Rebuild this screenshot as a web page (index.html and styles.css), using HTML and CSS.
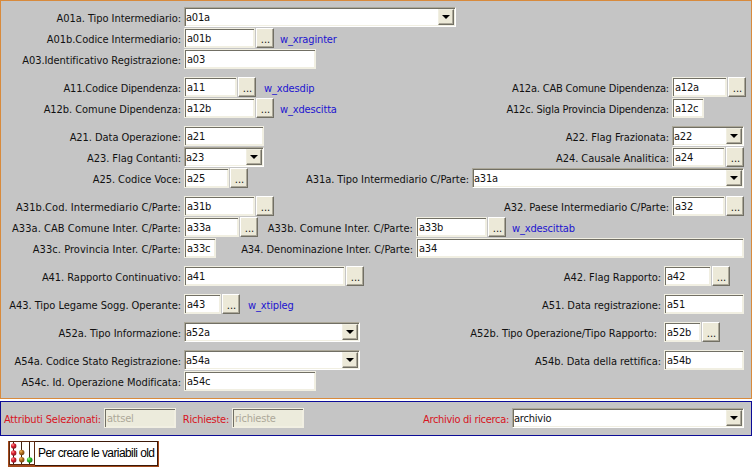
FILE: index.html
```
<!DOCTYPE html>
<html lang="it">
<head>
<meta charset="utf-8">
<title>Archivio</title>
<link rel="stylesheet" href="styles.css">
</head>
<body>
<main class="panel main">
  <div class="row"><label class="first">A01a. Tipo Intermediario:</label><div class="select w272">a01a<i></i></div></div>
  <div class="row"><label class="first">A01b.Codice Intermediario:</label><div class="input w71">a01b</div><button>...</button><span class="note near">w_xraginter</span></div>
  <div class="row"><label class="first">A03.Identificativo Registrazione:</label><div class="input w132">a03</div></div>

  <div class="row group"><label class="first tight">A11.Codice Dipendenza:</label><div class="input w53">a11</div><button>...</button><span class="note">w_xdesdip</span>
    <label class="right tight">A12a. CAB Comune Dipendenza:</label><div class="tail t79"><div class="input w55">a12a</div><button>...</button></div></div>
  <div class="row"><label class="first">A12b. Comune Dipendenza:</label><div class="input w71">a12b</div><button>...</button><span class="note near">w_xdescitta</span>
    <label class="right tight">A12c. Sigla Provincia Dipendenza:</label><div class="tail t79"><div class="input w32">a12c</div></div></div>

  <div class="row group"><label class="first">A21. Data Operazione:</label><div class="input w80">a21</div>
    <label class="right">A22. Flag Frazionata:</label><div class="tail t79"><div class="select w72">a22<i></i></div></div></div>
  <div class="row"><label class="first">A23. Flag Contanti:</label><div class="select w80">a23<i></i></div>
    <label class="right">A24. Causale Analitica:</label><div class="tail t79"><div class="input w53">a24</div><button>...</button></div></div>
  <div class="row"><label class="first">A25. Codice Voce:</label><div class="input w45">a25</div><button>...</button>
    <label class="right">A31a. Tipo Intermediario C/Parte:</label><div class="tail t279"><div class="select w272">a31a<i></i></div></div></div>

  <div class="row group"><label class="first loose">A31b.Cod. Intermediario C/Parte:</label><div class="input w71">a31b</div><button>...</button>
    <label class="right">A32. Paese Intermediario C/Parte:</label><div class="tail t79"><div class="input w53">a32</div><button>...</button></div></div>
  <div class="row"><label class="first loose">A33a. CAB Comune Inter. C/Parte:</label><div class="input w55">a33a</div><button>...</button>
    <label class="right loose">A33b. Comune Inter. C/Parte:</label><div class="tail t335"><div class="input w71">a33b</div><button>...</button><span class="note near">w_xdescittab</span></div></div>
  <div class="row"><label class="first loose">A33c. Provincia Inter. C/Parte:</label><div class="input w32">a33c</div>
    <label class="right">A34. Denominazione Inter. C/Parte:</label><div class="tail t335"><div class="input w328">a34</div></div></div>

  <div class="row group"><label class="first">A41. Rapporto Continuativo:</label><div class="input w161">a41</div><button>...</button>
    <label class="right">A42. Flag Rapporto:</label><div class="tail t87"><div class="input w47">a42</div><button>...</button></div></div>

  <div class="row group"><label class="first">A43. Tipo Legame Sogg. Operante:</label><div class="input w37">a43</div><button>...</button><span class="note">w_xtipleg</span>
    <label class="right">A51. Data registrazione:</label><div class="tail t87"><div class="input w80">a51</div></div></div>

  <div class="row group"><label class="first">A52a. Tipo Informazione:</label><div class="select w176">a52a<i></i></div>
    <label class="right wide">A52b. Tipo Operazione/Tipo Rapporto:</label><div class="tail t87"><div class="input w37">a52b</div><button>...</button></div></div>

  <div class="row group"><label class="first">A54a. Codice Stato Registrazione:</label><div class="select w176">a54a<i></i></div>
    <label class="right">A54b. Data della rettifica:</label><div class="tail t87"><div class="input w80">a54b</div></div></div>
  <div class="row"><label class="first">A54c. Id. Operazione Modificata:</label><div class="input w132">a54c</div></div>
</main>

<section class="panel search">
  <div class="row"><label class="first tight">Attributi Selezionati:</label><div class="input disabled w72">attsel</div><label class="requests">Richieste:</label><div class="input disabled w72">richieste</div>
    <label class="right archive">Archivio di ricerca:</label><div class="tail t239"><div class="select w232">archivio<i></i></div></div></div>
</section>

<div class="create">
  <svg width="27" height="25" viewBox="0 0 27 25">
    <defs>
      <radialGradient id="red" cx=".35" cy=".3" r=".75"><stop offset="0" stop-color="#ff9a9a"/><stop offset=".4" stop-color="#e02434"/><stop offset="1" stop-color="#80101c"/></radialGradient>
      <radialGradient id="brown" cx=".35" cy=".3" r=".75"><stop offset="0" stop-color="#f0b860"/><stop offset=".4" stop-color="#b87420"/><stop offset="1" stop-color="#6c3c08"/></radialGradient>
      <radialGradient id="green" cx=".35" cy=".3" r=".75"><stop offset="0" stop-color="#a0ff90"/><stop offset=".4" stop-color="#28bc28"/><stop offset="1" stop-color="#107010"/></radialGradient>
    </defs>
    <path d="M0 0H27V25H0Z" fill="#a34a1c"/>
    <path d="M1 0H27V24H1Z" fill="#5c2810"/>
    <path d="M2 1H26V23H2Z" fill="#fff"/>
    <path d="M5.5 1V23M13.5 1V23M21.5 1V23" stroke="#3c2010"/>
    <g fill="url(#red)"><circle cx="5.7" cy="5" r="2.7"/><circle cx="5.7" cy="12" r="2.7"/><circle cx="5.7" cy="19" r="2.7"/></g>
    <g fill="url(#brown)"><circle cx="13.7" cy="11.5" r="2.7"/><circle cx="13.7" cy="18.7" r="2.7"/></g>
    <circle cx="21.7" cy="19" r="2.8" fill="url(#green)"/>
  </svg>
  <span>Per creare le variabili old</span>
</div>
</body>
</html>
```
FILE: styles.css
```
* { box-sizing: border-box; }
body {
  margin: 0;
  width: 752px;
  height: 467px;
  overflow: hidden;
  background: #fff;
  color: #111;
  font: 11px/14px "DejaVu Sans Condensed", Tahoma, sans-serif;
  letter-spacing: -0.2px;
  white-space: nowrap;
}
.panel { background: #c5c5c5; width: 752px; }
.main { height: 399px; padding: 6px 0 0; border: 1px solid #d88a3c; }
.search { height: 35px; margin-top: 2px; padding-top: 6px; border: 1px solid #0c0c96; color: #d8141e; }

.row { display: flex; height: 21px; align-items: flex-start; }
.group { margin-top: 7px; }
label { display: block; padding: 5px 3px 0 0; text-align: right; flex: none; letter-spacing: -0.05px; }
label.loose { letter-spacing: 0.05px; }
label.tight { letter-spacing: -0.18px; }
label.archive { letter-spacing: -0.3px; }
label.first { width: 183px; }
.search label.first { width: 103px; }
label.right { margin-left: auto; }
label.wide { padding-right: 7px; }
label.requests { width: 56px; letter-spacing: -0.25px; }

/* trailing fields: fixed width so they line up from row to row */
.tail { display: flex; flex: none; }
.t79 { width: 79px; }
.t87 { width: 87px; }
.t239 { width: 239px; }
.t279 { width: 279px; }
.t335 { width: 335px; }

.input, .select {
  position: relative;
  flex: none;
  height: 20px;
  padding: 3px 0 0 2px;
  color: #111;
  background: #fff;
  border: 1px solid #f1efe2;
  box-shadow: inset 1px 1px #716f64, inset -1px -1px #f1efe2;
}
.select {
  padding-left: 1px;
  border-color: #aca899 #fff #fff #aca899;
}
.disabled { background: #ecebdc; color: #aca899; }
.select i {
  position: absolute;
  top: 1px;
  right: 1px;
  width: 16px;
  height: 16px;
  background: #ece9d8;
  border: 1px solid;
  border-color: #f1efe2 #716f64 #716f64 #f1efe2;
  box-shadow: inset -1px -1px #aca899;
}
.select i::after {
  content: "";
  position: absolute;
  left: 3px;
  top: 5px;
  border: 4px solid transparent;
  border-top-color: #000;
  border-bottom: 0;
}
button {
  flex: none;
  width: 18px;
  height: 20px;
  margin: 0 0 0 1px;
  padding: 3px 0 0 1px;
  font: 11px/14px "DejaVu Sans Condensed", Tahoma, sans-serif;
  letter-spacing: 0;
  color: #111;
  background: #ece9d8;
  border: 1px solid;
  border-color: #fff #716f64 #716f64 #fff;
  box-shadow: inset -1px -1px #aca899;
}
.note { padding: 5px 0 0 8px; color: #1c14d0; letter-spacing: -0.15px; }
.near { padding-left: 6px; }

.w32 { width: 32px; }
.w37 { width: 37px; }
.w45 { width: 45px; }
.w47 { width: 47px; }
.w53 { width: 53px; }
.w55 { width: 55px; }
.w71 { width: 71px; }
.w72 { width: 72px; }
.w80 { width: 80px; }
.w132 { width: 132px; }
.w161 { width: 161px; }
.w176 { width: 176px; }
.w232 { width: 232px; }
.w272 { width: 272px; }
.w328 { width: 328px; }

.create {
  display: flex;
  width: 151px;
  height: 26px;
  margin: 5px 0 0 8px;
  color: #000;
  border: 1px solid #a34a1c;
  border-width: 0 1px 1px 0;
  box-shadow: inset -1px -1px #3c1808, inset 0 1px #3c1808;
  font: 12px/24px "Liberation Sans", Arial, sans-serif;
  letter-spacing: -0.58px;
}
.create svg { flex: none; }
.create span { padding-left: 3px; }
```
